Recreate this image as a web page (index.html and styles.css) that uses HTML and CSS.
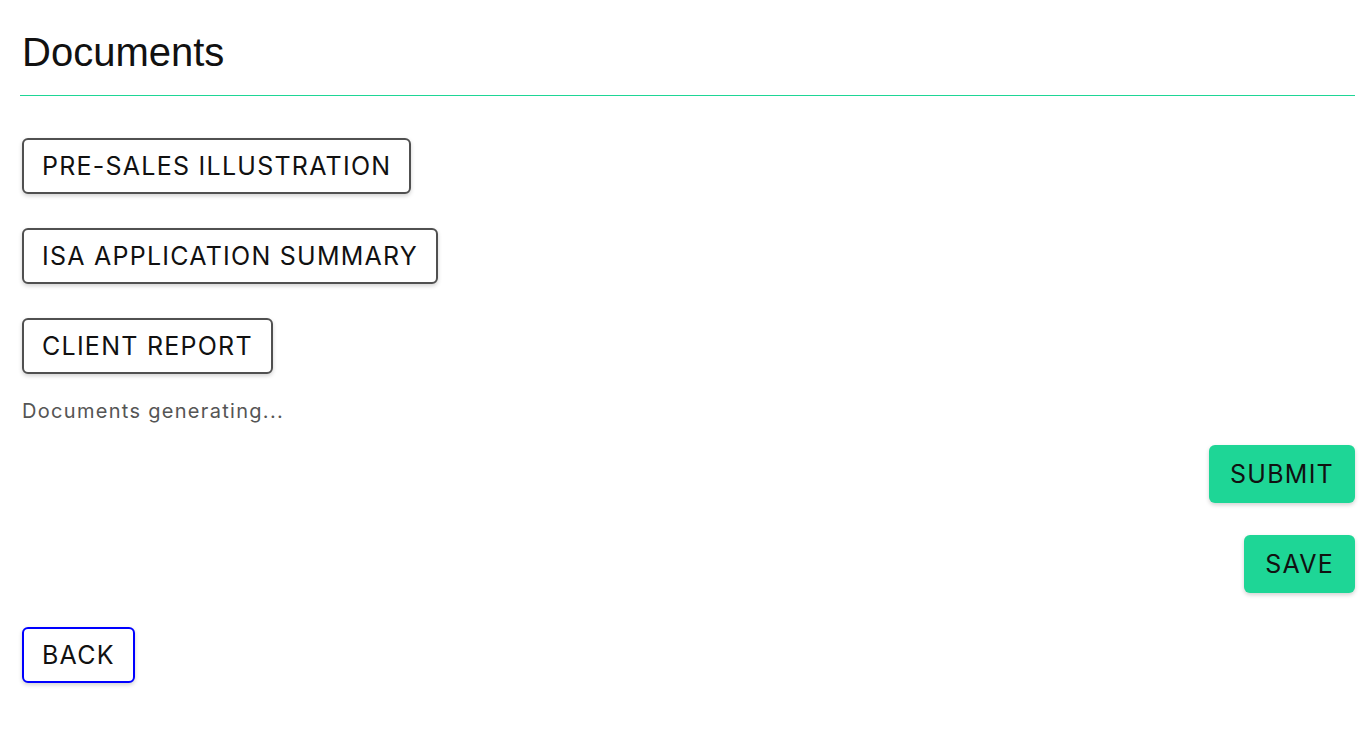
FILE: index.html
```html
<html>
    <head>
        <meta charset="UTF-8">
        <title>Documents</title>
        <link rel="stylesheet" href="styles.css">
    </head>
    <body>
        <div id="page">
            <h1 class="title">Documents</h1>

            <div class="doc-list">
                <button class="btn btn-doc">PRE-SALES ILLUSTRATION</button>
                <button class="btn btn-doc">ISA APPLICATION SUMMARY</button>
                <button class="btn btn-doc">CLIENT REPORT</button>
            </div>

            <p class="status">Documents generating...</p>

            <div class="actions">
                <button class="btn btn-go">SUBMIT</button>
                <button class="btn btn-go">SAVE</button>
            </div>

            <div class="back-row">
                <button class="btn btn-back">BACK</button>
            </div>
        </div>
    </body>
</html>
```

FILE: styles.css
```css
/* page colours
 green : #1ed696
 border grey : #555
*/
body {
    margin: 0;
    font-family: 'Inter', 'Liberation Sans', sans-serif;
    color: #111;
}

#page {
    padding: 29px 17px 0 20px;
}

.title {
    font-family: 'Liberation Sans', sans-serif;
    font-weight: 400;
    font-size: 40px;
    line-height: 46px;
    margin: 0;
    padding: 0 0 20px 2px;
    border-bottom: solid 1px #1ed696;
}

.doc-list {
    display: flex;
    flex-direction: column;
    align-items: flex-start;
    gap: 34px;
    margin-top: 42px;
    padding-left: 2px;
}

.btn {
    font-family: 'Inter', 'Liberation Sans', sans-serif;
    font-size: 25px;
    font-weight: 400;
    letter-spacing: 1.25px;
    color: #111;
    background: #fff;
    height: 56px;
    padding: 0 18px;
    border-radius: 6px;
    cursor: pointer;
    box-shadow: 0 2px 4px rgba(0,0,0,0.18);
}

.btn-doc {
    border: solid 2px #505050;
}

.status {
    margin: 25px 0 0 2px;
    font-size: 20px;
    letter-spacing: 1.3px;
    color: #555;
}

.actions {
    display: flex;
    flex-direction: column;
    align-items: flex-end;
    gap: 32px;
    margin-top: 22px;
}

.btn-go {
    border: none;
    background: #1ed696;
    height: 58px;
    padding: 0 21px;
}

.back-row {
    margin-top: 34px;
    padding-left: 2px;
}

.btn-back {
    border: solid 2px #0000ff;
}
```
